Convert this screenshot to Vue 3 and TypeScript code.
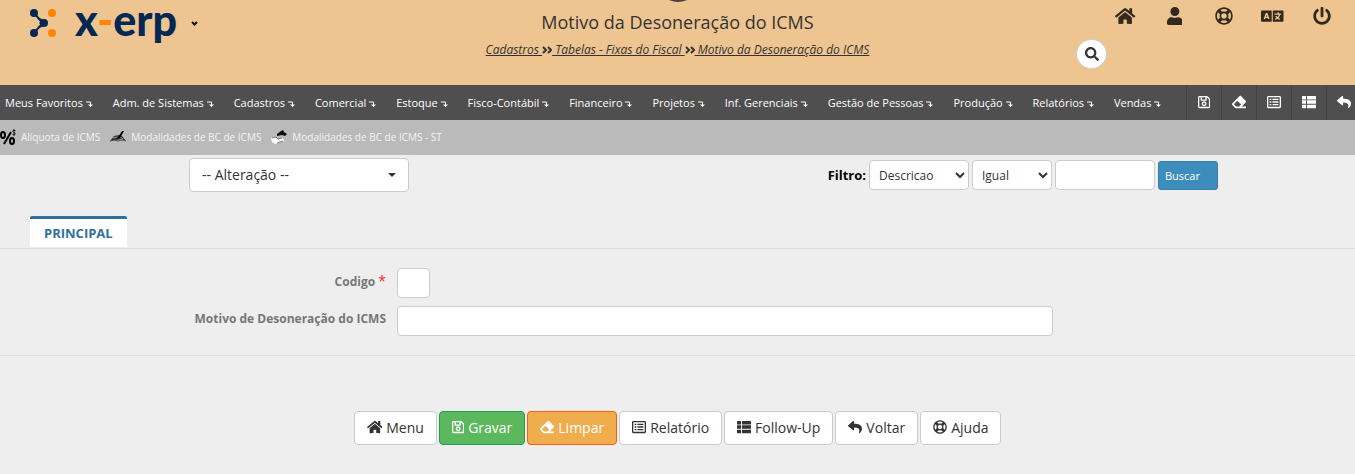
<script setup lang="ts">
import { ref } from 'vue'

interface Icon {
  box: string
  d: string
}

const icons: Record<string, Icon> = {
  home: {
    box: '0 0 576 512',
    d: 'M280.37 148.26L96 300.11V464a16 16 0 0 0 16 16l112.06-.29a16 16 0 0 0 15.92-16V368a16 16 0 0 1 16-16h64a16 16 0 0 1 16 16v95.64a16 16 0 0 0 16 16.05L464 480a16 16 0 0 0 16-16V300L295.67 148.26a12.19 12.19 0 0 0-15.3 0zM571.6 251.47L488 182.56V44.05a12 12 0 0 0-12-12h-56a12 12 0 0 0-12 12v72.61L318.47 43a48 48 0 0 0-61 0L4.34 251.47a12 12 0 0 0-1.6 16.9l25.5 31A12 12 0 0 0 45.15 301l235.22-193.74a12.19 12.19 0 0 1 15.3 0L530.9 301a12 12 0 0 0 16.9-1.6l25.5-31a12 12 0 0 0-1.7-16.93z',
  },
  user: {
    box: '0 0 448 512',
    d: 'M224 256c70.7 0 128-57.3 128-128S294.7 0 224 0 96 57.3 96 128s57.3 128 128 128zm89.6 32h-16.7c-22.2 10.2-46.9 16-72.9 16s-50.6-5.8-72.9-16h-16.7C60.2 288 0 348.2 0 422.4V464c0 26.5 21.5 48 48 48h352c26.5 0 48-21.5 48-48v-41.6c0-74.2-60.2-134.4-134.4-134.4z',
  },
  ring: {
    box: '0 0 512 512',
    d: 'M256 504c136.967 0 248-111.033 248-248S392.967 8 256 8 8 119.033 8 256s111.033 248 248 248zm-103.398-76.72l53.411-53.411c31.806 13.506 68.128 13.522 99.974 0l53.411 53.411c-63.217 38.319-143.579 38.319-206.796 0zM336 256c0 44.112-35.888 80-80 80s-80-35.888-80-80 35.888-80 80-80 80 35.888 80 80zm91.28 103.398l-53.411-53.411c13.505-31.806 13.522-68.128 0-99.974l53.411-53.411c38.319 63.217 38.319 143.579 0 206.796zM359.397 84.72l-53.411 53.411c-31.806-13.505-68.128-13.522-99.973 0L152.602 84.72c63.217-38.319 143.579-38.319 206.795 0zM84.72 152.602l53.411 53.411c-13.506 31.806-13.522 68.128 0 99.974L84.72 359.398c-38.319-63.217-38.319-143.579 0-206.796z',
  },
  language: {
    box: '0 0 640 512',
    d: 'M24 96h280v320H24a24 24 0 0 1-24-24V120a24 24 0 0 1 24-24zM336 96h280a24 24 0 0 1 24 24v272a24 24 0 0 1-24 24H336zM136 168L76 344h44l10-34h60l10 34h44L184 168zm24 50l18 56h-36zM470 152v34H384v36h124c-8 26-22 46-40 64-10-10-18-20-24-32h-40c8 22 20 40 34 56-14 8-30 16-48 20l14 34c24-8 46-18 64-32 20 14 40 24 64 32l14-34c-18-4-34-12-48-20 24-24 40-54 48-88h26v-36h-66v-34z',
  },
  power: {
    box: '0 0 512 512',
    d: 'M400 54.1c63 45 104 118.6 104 201.9 0 136.8-110.8 247.7-247.5 248C120 504.3 8.2 393 8 256.4 7.9 173.1 48.9 99.3 111.8 54.2c11.7-8.3 28-4.8 35 7.7L162.6 90c5.9 10.5 3.1 23.8-6.6 31-41.5 30.8-68 79.6-68 134.9-.1 92.3 74.5 168.1 168 168.1 91.6 0 168.6-74.2 168-169.1-.3-51.8-24.7-101.8-68.1-134-9.7-7.2-12.4-20.5-6.5-30.9l15.8-28.1c7-12.4 23.2-16.1 34.8-7.8zM296 264V24c0-13.3-10.7-24-24-24h-32c-13.3 0-24 10.7-24 24v240c0 13.3 10.7 24 24 24h32c13.3 0 24-10.7 24-24z',
  },
  search: {
    box: '0 0 512 512',
    d: 'M505 442.7L405.3 343c-4.5-4.5-10.6-7-17-7H372c27.6-35.3 44-79.7 44-128C416 93.1 322.9 0 208 0S0 93.1 0 208s93.1 208 208 208c48.3 0 92.7-16.4 128-44v16.3c0 6.4 2.5 12.5 7 17l99.7 99.7c9.4 9.4 24.6 9.4 33.9 0l28.3-28.3c9.4-9.4 9.4-24.6.1-34zM208 336c-70.7 0-128-57.2-128-128 0-70.7 57.2-128 128-128 70.7 0 128 57.2 128 128 0 70.7-57.2 128-128 128z',
  },
  save: {
    box: '0 0 448 512',
    d: 'M433.941 129.941l-83.882-83.882A48 48 0 0 0 316.118 32H48C21.49 32 0 53.49 0 80v352c0 26.51 21.49 48 48 48h352c26.51 0 48-21.49 48-48V163.882a48 48 0 0 0-14.059-33.941zM272 80v80H144V80h128zm122 352H54a6 6 0 0 1-6-6V86a6 6 0 0 1 6-6h42v104c0 13.255 10.745 24 24 24h176c13.255 0 24-10.745 24-24V83.882l78.243 78.243a6 6 0 0 1 1.757 4.243V426a6 6 0 0 1-6 6zM224 232c-48.523 0-88 39.477-88 88s39.477 88 88 88 88-39.477 88-88-39.477-88-88-88zm0 128c-22.056 0-40-17.944-40-40s17.944-40 40-40 40 17.944 40 40-17.944 40-40 40z',
  },
  eraser: {
    box: '0 0 512 512',
    d: 'M497.941 273.941c18.745-18.745 18.745-49.137 0-67.882l-160-160c-18.745-18.745-49.136-18.746-67.883 0l-256 256c-18.745 18.745-18.745 49.137 0 67.882l96 96A48.004 48.004 0 0 0 144 480h356c6.627 0 12-5.373 12-12v-40c0-6.627-5.373-12-12-12H355.883l142.058-142.059zm-302.627-62.627l137.373 137.373L265.373 416H150.628l-80-80 124.686-124.686z',
  },
  report: {
    box: '0 0 512 512',
    d: 'M464 32H48C21.49 32 0 53.49 0 80v352c0 26.51 21.49 48 48 48h416c26.51 0 48-21.49 48-48V80c0-26.51-21.49-48-48-48zm-6 400H54a6 6 0 0 1-6-6V86a6 6 0 0 1 6-6h404a6 6 0 0 1 6 6v340a6 6 0 0 1-6 6zM200 136h216v48H200zM200 232h216v48H200zM200 328h216v48H200zM96 136h64v48H96zM96 232h64v48H96zM96 328h64v48H96z',
  },
  list: {
    box: '0 0 512 512',
    d: 'M24 32h125v128H0V56a24 24 0 0 1 24-24zM182 32h306a24 24 0 0 1 24 24v104H182zM0 192h149v128H0zM182 192h330v128H182zM0 352h149v128H24a24 24 0 0 1-24-24zM182 352h330v104a24 24 0 0 1-24 24H182z',
  },
  reply: {
    box: '0 0 512 512',
    d: 'M8.309 189.836L184.313 37.851C199.719 24.546 224 35.347 224 56.015v80.053c160.629 1.839 288 34.032 288 186.258 0 61.441-39.581 122.309-83.333 154.132-13.653 9.931-33.111-2.533-28.077-18.631 45.344-145.012-21.507-183.51-176.59-185.742V360c0 20.7-24.3 31.453-39.687 18.164l-176.004-152c-11.071-9.562-11.086-26.753 0-36.328z',
  },
}

const headerActions = [
  { icon: 'home', label: 'Menu' },
  { icon: 'user', label: 'Usuário' },
  { icon: 'ring', label: 'Ajuda' },
  { icon: 'language', label: 'Idioma' },
  { icon: 'power', label: 'Sair' },
]

const crumbs = ['Cadastros', 'Tabelas - Fixas do Fiscal', 'Motivo da Desoneração do ICMS']

const menus = [
  'Meus Favoritos', 'Adm. de Sistemas', 'Cadastros', 'Comercial', 'Estoque',
  'Fisco-Contábil', 'Financeiro', 'Projetos', 'Inf. Gerenciais',
  'Gestão de Pessoas', 'Produção', 'Relatórios', 'Vendas',
]

const tools = [
  { icon: 'save', label: 'Gravar' },
  { icon: 'eraser', label: 'Limpar' },
  { icon: 'report', label: 'Relatório' },
  { icon: 'list', label: 'Follow-Up' },
  { icon: 'reply', label: 'Voltar' },
]

const footerActions = [
  { icon: 'home', label: 'Menu', kind: '' },
  { icon: 'save', label: 'Gravar', kind: 'save' },
  { icon: 'eraser', label: 'Limpar', kind: 'clear' },
  { icon: 'report', label: 'Relatório', kind: '' },
  { icon: 'list', label: 'Follow-Up', kind: '' },
  { icon: 'reply', label: 'Voltar', kind: '' },
  { icon: 'ring', label: 'Ajuda', kind: '' },
]

const mode = ref('-- Alteração --')
const field = ref('Descricao')
const operator = ref('Igual')
const term = ref('')
const code = ref('')
const reason = ref('')
</script>

<template>
  <div class="page">
    <header class="top">
      <span class="avatar" aria-hidden="true"></span>
      <div class="brand">
        <svg class="mark" viewBox="0 0 28 28" aria-hidden="true">
          <g fill="#032854">
            <circle cx="5" cy="4" r="4" />
            <circle cx="5" cy="24" r="4" />
            <circle cx="15" cy="14" r="4" />
            <path d="M8 7q2 3 6 3l-4 4 4 4q-4 0-6 3l1-3q3-2 3-4t-3-4z" />
          </g>
          <path d="M5 4l7 8q1 2 0 4l-7 8" fill="none" stroke="#032854" stroke-width="2" />
          <circle cx="23" cy="4" r="4" fill="#ff8400" />
          <circle cx="23" cy="24" r="4" fill="#ff8400" />
        </svg>
        <span class="name">x<span class="dash">-</span>erp</span>
        <button class="plain" type="button" aria-label="Trocar empresa">
          <svg class="chev" viewBox="0 0 7 5"><path d="M1 1l2.500 2.500L6 1" fill="none" stroke="#111" stroke-width="2" /></svg>
        </button>
      </div>
      <div class="heading">
        <h1>Motivo da Desoneração do ICMS</h1>
        <nav class="crumbs">
          <template v-for="(c, i) in crumbs" :key="c">
            <svg v-if="i" class="sep" viewBox="0 0 10 8" aria-hidden="true">
              <path d="M1 1l3 3-3 3M6 1l3 3-3 3" fill="none" stroke="#333" stroke-width="2" />
            </svg>
            <a href="#">{{ i ? '\u00a0' : '' }}{{ c }}{{ i < crumbs.length - 1 ? '\u00a0' : '' }}</a>
          </template>
        </nav>
      </div>
      <div class="side">
        <div class="actions">
          <a v-for="a in headerActions" :key="a.icon" href="#" :aria-label="a.label">
            <svg class="big" :viewBox="icons[a.icon].box"><path fill-rule="evenodd" :d="icons[a.icon].d" /></svg>
          </a>
        </div>
        <button class="search" type="button" aria-label="Pesquisar">
          <svg class="glyph" :viewBox="icons.search.box"><path :d="icons.search.d" /></svg>
        </button>
      </div>
    </header>

    <nav class="menu">
      <a v-for="m in menus" :key="m" class="entry" href="#">{{ m }}
        <svg class="drop" viewBox="0 0 7 6" aria-hidden="true">
          <path d="M0 1h4.5v3" fill="none" stroke="#fff" />
          <path d="M2 3.5h5l-2.5 2.5z" fill="#fff" />
        </svg>
      </a>
      <div class="tools">
        <a v-for="t in tools" :key="t.icon" href="#" :aria-label="t.label">
          <svg class="tool" :viewBox="icons[t.icon].box"><path :d="icons[t.icon].d" fill-rule="evenodd" /></svg>
        </a>
      </div>
    </nav>

    <nav class="shortcuts">
      <a href="#">
        <svg class="pic" viewBox="0 0 16 16" aria-hidden="true">
          <g fill="none" stroke="#000" stroke-width="2">
            <ellipse cx="3" cy="6" rx="2" ry="3" />
            <ellipse cx="12" cy="12" rx="2" ry="3" />
            <path d="M11 3L4 15" />
          </g>
          <path d="M15.500 1.500h-2.500v1.500l2 1v1.500h-2.500M14 0v7" fill="none" stroke="#222" stroke-width="1" />
        </svg>Alíquota de ICMS</a>
      <a href="#">
        <svg class="pic" viewBox="0 0 16 16" aria-hidden="true">
          <path d="M0 12l4-5 5-1 3 1 4 5-5-2-4 1z" fill="#333" />
          <path d="M0 12q5-2 8 0 4-2 8 0" fill="none" stroke="#555" />
          <path d="M3 9l4-1M10 8l3 2" fill="none" stroke="#999" />
          <path d="M7 10l5-8 2 0-4 7z" fill="#000" />
        </svg>Modalidades de BC de ICMS</a>
      <a href="#">
        <svg class="pic" viewBox="0 0 16 16" aria-hidden="true">
          <path d="M0 9l4-1 2 2 6-1 1 3-9 3-3-2z" fill="#fff" />
          <path d="M1 9l4-1 2 2 4-1M6 14l6-2" fill="none" stroke="#777" />
          <path d="M6 5l4-3 2-1 1 2 3 2-2 2-3-1-5 1z" fill="#111" />
        </svg>Modalidades de BC de ICMS - ST</a>
    </nav>

    <main>
      <div class="bar">
        <div class="picker">
          <select v-model="mode" aria-label="Modo">
            <option>-- Alteração --</option>
          </select>
          <svg class="caret" viewBox="0 0 8 4" aria-hidden="true"><path d="M0 0h8L4 4z" fill="#333" /></svg>
        </div>
        <form class="filter" @submit.prevent>
          <label for="field">Filtro:</label>
          <select id="field" v-model="field" class="wide"><option>Descricao</option></select>
          <select v-model="operator" class="narrow" aria-label="Operador"><option>Igual</option></select>
          <input v-model="term" class="wide" type="text" aria-label="Valor do filtro" />
          <button type="submit">Buscar</button>
        </form>
      </div>

      <div class="tabs" role="tablist">
        <button type="button" role="tab" aria-selected="true">PRINCIPAL</button>
      </div>

      <form class="fields" @submit.prevent>
        <label for="code">Codigo <span class="req">*</span></label>
        <div><input id="code" v-model="code" class="code" type="text" /></div>
        <label for="reason">Motivo de Desoneração do ICMS</label>
        <div><input id="reason" v-model="reason" type="text" /></div>
      </form>

      <div class="buttons">
        <button v-for="b in footerActions" :key="b.label" type="button" :class="b.kind">
          <svg class="glyph" :viewBox="icons[b.icon].box" aria-hidden="true"><path :d="icons[b.icon].d" fill-rule="evenodd" /></svg>
          <span>{{ b.label }}</span>
        </button>
      </div>
    </main>
  </div>
</template>

<style>
body {
  margin: 0;
  background: #eee;
}
</style>

<style scoped>
.page {
  font-family: "Open Sans", "Noto Sans", sans-serif;
  color: #333;
  overflow: hidden;
}
.page * {
  box-sizing: border-box;
}
a {
  color: inherit;
  text-decoration: none;
}
button,
input,
select {
  font-family: inherit;
  color: inherit;
  margin: 0;
}
svg {
  flex: none;
}
.top {
  position: relative;
  display: grid;
  grid-template-columns: 1fr auto 1fr;
  height: 85px;
  background: #eec591;
}
.avatar {
  position: absolute;
  top: -42px;
  left: 50%;
  width: 44px;
  height: 44px;
  margin-left: -22px;
  border-radius: 50%;
  background: #444;
}
.brand {
  display: flex;
  align-items: center;
  align-self: start;
  height: 46px;
  padding-left: 29px;
}
.mark {
  width: 28px;
  height: 28px;
}
.name {
  margin-left: 18px;
  padding-bottom: 6px;
  font: 900 43px/40px Lato, "Open Sans", sans-serif;
  color: #032854;
}
.dash {
  color: #ff8400;
}
.plain {
  display: flex;
  margin-left: 14px;
  padding: 0;
  border: 0;
  background: none;
}
.chev {
  width: 7px;
  height: 5px;
}
.heading {
  padding-top: 10px;
  text-align: center;
}
h1 {
  margin: 0;
  font-size: 18px;
  font-weight: 400;
  line-height: 25px;
}
.crumbs {
  display: flex;
  align-items: center;
  justify-content: center;
  margin-top: 6px;
  font-size: 12px;
  line-height: 18px;
  font-style: italic;
}
.crumbs a {
  text-decoration: underline;
}
.sep {
  width: 10px;
  height: 8px;
}
.side {
  justify-self: end;
  padding-right: 9px;
}
.actions {
  display: flex;
  padding-left: 25px;
  height: 32px;
}
.actions a {
  display: flex;
  align-items: center;
  justify-content: center;
  width: 49px;
}
.big {
  height: 18px;
  fill: #33291c;
}
.search {
  display: flex;
  align-items: center;
  justify-content: center;
  width: 31px;
  height: 30px;
  margin-top: 7px;
  padding: 0;
  border: 1px solid #ccc;
  border-radius: 50%;
  background: #fff;
}
.glyph {
  height: 14px;
  fill: currentColor;
}
.menu {
  display: flex;
  align-items: center;
  gap: 20px;
  height: 35px;
  padding-left: 5px;
  background: #4f4f4f;
  color: #fff;
  font-size: 11px;
  overflow: hidden;
}
.entry {
  flex: none;
  white-space: nowrap;
}
.drop {
  width: 7px;
  height: 6px;
}
.tools {
  display: flex;
  flex: none;
  margin-left: 5px;
}
.tools a {
  display: flex;
  align-items: center;
  justify-content: center;
  width: 35px;
  height: 35px;
  padding-bottom: 2px;
  border-left: 1px solid #434343;
}
.tool {
  height: 14px;
  fill: #fff;
}
.shortcuts {
  display: flex;
  align-items: center;
  gap: 10px;
  height: 35px;
  padding-bottom: 2px;
  background: #bababa;
  color: #f4f4f4;
  font-size: 10px;
}
.shortcuts a {
  display: flex;
  align-items: center;
  gap: 5px;
}
.pic {
  width: 16px;
  height: 16px;
}
.bar {
  display: flex;
  justify-content: space-between;
  align-items: center;
  padding: 3px 137px 0 189px;
}
.picker {
  position: relative;
  width: 220px;
}
.picker select {
  display: block;
  appearance: none;
  width: 100%;
  height: 34px;
  padding: 0 12px 2px;
  border: 1px solid #ccc;
  border-radius: 4px;
  background: #fff;
  font-size: 14px;
}
.caret {
  position: absolute;
  top: 15px;
  right: 13px;
  width: 8px;
  height: 4px;
  pointer-events: none;
}
.filter {
  display: flex;
  align-items: center;
  gap: 3px;
  font-size: 13px;
}
.filter label {
  font-weight: 700;
  color: #000;
}
.filter select,
.filter input,
.fields input {
  height: 30px;
  border: 1px solid #ccc;
  border-radius: 4px;
  background: #fff;
  font-size: 12px;
}
.filter select {
  padding: 0 5px;
}
.wide {
  width: 100px;
}
.narrow {
  width: 80px;
}
.filter button {
  width: 60px;
  height: 29px;
  padding: 0 6px;
  border: 1px solid #367fa9;
  border-radius: 3px;
  background: #3c8dbc;
  color: #fff;
  font-size: 11px;
  text-align: left;
}
.tabs {
  margin-top: 24px;
  padding: 0 30px 1px;
  border-bottom: 1px solid #ddd;
}
.tabs button {
  display: block;
  height: 31px;
  padding: 0 14px;
  border: 0;
  border-top: 3px solid #31709c;
  border-radius: 2px 2px 0 0;
  background: #fff;
  color: #31709c;
  font-size: 13px;
  font-weight: 700;
}
.fields {
  display: grid;
  grid-template-columns: 386fr 656fr 291fr;
  gap: 8px 11px;
  padding: 19px 0;
  border-bottom: 1px solid #ddd;
}
.fields label {
  grid-column: 1;
  padding-top: 4px;
  text-align: right;
  font-size: 12px;
  font-weight: 700;
  line-height: 18px;
  color: #777;
}
.fields div {
  display: flex;
}
.fields input {
  width: 100%;
}
.fields .code {
  width: 33px;
}
.req {
  color: #f22;
  font-size: 14px;
  font-weight: 400;
}
.buttons {
  display: flex;
  justify-content: center;
  gap: 2px;
  margin-top: 55px;
}
.buttons button {
  display: flex;
  align-items: center;
  gap: 4px;
  height: 34px;
  padding: 0 12px 2px;
  border: 1px solid #ccc;
  border-radius: 4px;
  background: #fff;
  font-size: 14px;
}
.buttons button.save {
  border-color: #1f9d55;
  background: #5cb85c;
  color: #fff;
}
.buttons button.clear {
  border-color: #ff5a1f;
  background: #f0ad4e;
  color: #fff;
}
</style>
